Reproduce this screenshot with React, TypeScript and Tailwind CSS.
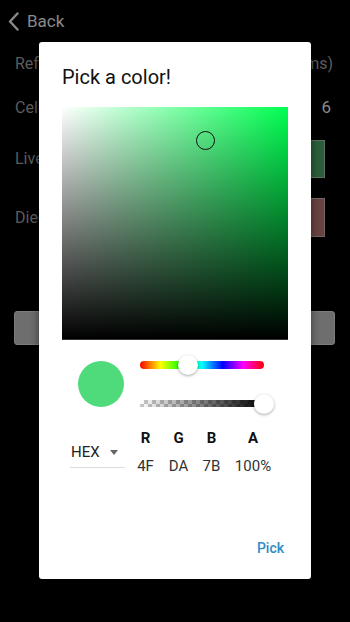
import React from "react";

export default function App() {
  return (
    <div className="relative w-[350px] h-[622px] bg-black overflow-hidden font-['Roboto',sans-serif]">
      {/* Page behind */}
      <div className="flex flex-col">
        <div className="h-[42px] flex items-center pl-[8px] gap-[8px] text-[#8a8a8a]">
          <svg width="11" height="19" viewBox="0 0 11 19" fill="none">
            <path d="M9.5 1.5 L2 9.5 L9.5 17.5" stroke="#8a8a8a" strokeWidth="2.4" strokeLinecap="round" strokeLinejoin="round" />
          </svg>
          <span className="text-[17px] leading-[20px]">Back</span>
        </div>
        <div className="h-[44px] flex items-center justify-between pl-[15px] pr-[17px] text-[16px] text-[#5c5c5c]">
          <span>Refresh</span>
          <span>(ms)</span>
        </div>
        <div className="h-[44px] flex items-center justify-between pl-[15px] pr-[19px] text-[16px] text-[#5c5c5c]">
          <span>Cell size</span>
          <span className="text-[#8a8a8a] text-[17px]">6</span>
        </div>
        <div className="h-[58px] flex items-center justify-between pl-[15px] pr-[25px] text-[16px] text-[#5c5c5c]">
          <span>Live cell color</span>
          <div className="w-[40px] h-[38px] bg-[#2a5e3a] border border-[#5f6f63]" />
        </div>
        <div className="h-[59px] flex items-center justify-between pl-[15px] pr-[25px] text-[16px] text-[#5c5c5c]">
          <span>Died cell color</span>
          <div className="w-[40px] h-[39px] bg-[#6a4242] border border-[#776565]" />
        </div>
        <div className="mt-[64px] ml-[14px] mr-[15px] h-[34px] bg-[#6e6e6e] border border-[#7c7c7c] rounded-[3px]" />
      </div>

      {/* Dialog */}
      <div className="absolute left-[39px] top-[42px] w-[272px] h-[537px] bg-white rounded-[3px] shadow-[0_2px_8px_rgba(0,0,0,0.5)] flex flex-col">
        <div className="pt-[23px] px-[23px] text-[20px] leading-[24px] text-[#111]">
          Pick a color!
        </div>
        <div className="mt-[18px] ml-[23px] relative w-[226px] h-[233px] border-b border-[#333] bg-[linear-gradient(to_top,#000,rgba(0,0,0,0)),linear-gradient(to_right,#fff,#00ff51)]">
          <div className="absolute left-[134px] top-[24px] w-[19px] h-[19px] rounded-full border-[1.5px] border-[#111]" />
        </div>

        {/* Preview + sliders */}
        <div className="mt-[21px] ml-[23px] flex">
          <div className="w-[78px] flex">
            <div className="ml-[16px] w-[46px] h-[46px] rounded-full bg-[#4FDA7B]" />
          </div>
          <div className="w-[124px] h-[46px] flex flex-col justify-between">
            <div className="relative h-[7.5px] rounded-full bg-[linear-gradient(to_right,#f00,#ff0,#0f0,#0ff,#00f,#f0f,#f00)]">
              <div className="absolute left-[38px] top-[-6px] w-[20px] h-[20px] rounded-full bg-white shadow-[0_1px_3px_rgba(0,0,0,0.35)]" />
            </div>
            <div className="relative h-[7px] bg-[linear-gradient(to_right,rgba(0,0,0,0),#000),repeating-conic-gradient(#c8c8c8_0_25%,#ffffff_0_50%)] [background-size:100%_100%,8px_8px]">
              <div className="absolute left-[114px] top-[-6.5px] w-[20px] h-[20px] rounded-full bg-white shadow-[0_1px_3px_rgba(0,0,0,0.35)]" />
            </div>
          </div>
        </div>

        {/* Mode + values */}
        <div className="mt-[21px] ml-[31px] flex items-start">
          <div className="mt-[14px] w-[55px] pb-[5px] border-b border-[#dcdcdc] flex items-center justify-between pl-[1px] pr-[7px]">
            <span className="text-[15px] leading-[20px] text-[#222]">HEX</span>
            <svg width="8" height="5" viewBox="0 0 8 5">
              <path d="M0 0 L8 0 L4 5 Z" fill="#666" />
            </svg>
          </div>
          <div className="ml-[4px] grid grid-cols-[33px_33px_33px_50px] text-center text-[15px] leading-[20px]">
            <span className="font-bold text-[#111]">R</span>
            <span className="font-bold text-[#111]">G</span>
            <span className="font-bold text-[#111]">B</span>
            <span className="font-bold text-[#111]">A</span>
            <span className="mt-[8px] text-[#333]">4F</span>
            <span className="mt-[8px] text-[#333]">DA</span>
            <span className="mt-[8px] text-[#333]">7B</span>
            <span className="mt-[8px] text-[#333]">100%</span>
          </div>
        </div>

        <div className="mt-auto flex justify-end pr-[27px] pb-[21px]">
          <span className="text-[14px] leading-[20px] font-medium text-[#2f8dc4]">Pick</span>
        </div>
      </div>
    </div>
  );
}
